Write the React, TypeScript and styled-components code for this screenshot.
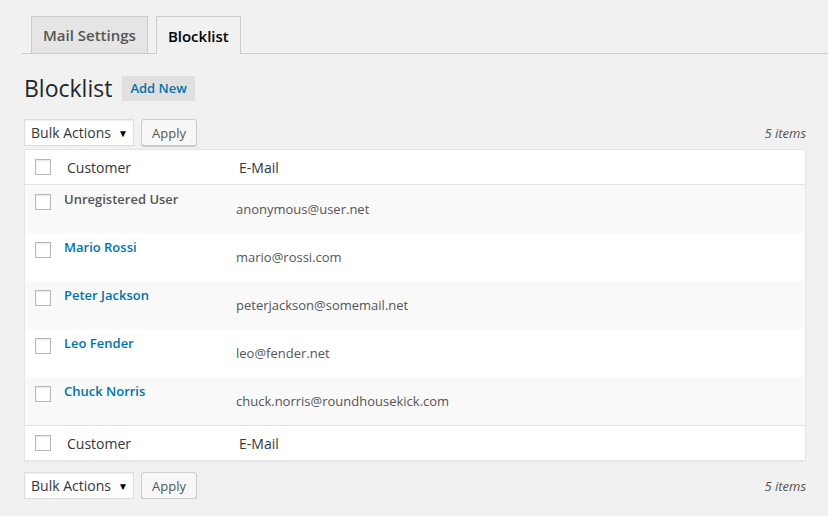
import React from "react";
import styled, { createGlobalStyle } from "styled-components";

const GlobalStyle = createGlobalStyle`
  body {
    margin: 0;
    background: #f1f1f1;
    font-family: "Open Sans", "Liberation Sans", sans-serif;
    font-size: 13px;
    color: #444;
  }
`;

const Page = styled.div`
  padding: 16px 22px 0 22px;
`;

const TabBar = styled.div`
  display: flex;
  gap: 8px;
  padding-left: 9px;
  border-bottom: 1px solid #ccc;
  margin-right: -22px;
`;

const Tab = styled.div<{ $active?: boolean }>`
  box-sizing: border-box;
  padding: 0 11px;
  display: flex;
  align-items: center;
  font-size: 15px;
  font-weight: 600;
  border: 1px solid #ccc;
  border-bottom: none;
  margin-bottom: ${(p) => (p.$active ? "-1px" : "0")};
  height: ${(p) => (p.$active ? "38px" : "37px")};
  background: ${(p) => (p.$active ? "#f1f1f1" : "#e5e5e5")};
  color: ${(p) => (p.$active ? "#000" : "#555")};
`;

const TitleRow = styled.div`
  display: flex;
  align-items: center;
  gap: 10px;
  padding: 20px 0 0 2px;
`;

const Title = styled.h1`
  margin: 0;
  font-size: 23px;
  font-weight: 400;
  color: #23282d;
  line-height: 29px;
`;

const AddNew = styled.span`
  display: inline-block;
  background: #e0e0e0;
  color: #0073aa;
  font-weight: 600;
  font-size: 13px;
  padding: 0 8px;
  line-height: 25px;
`;

const NavRow = styled.div<{ $foot?: boolean }>`
  display: flex;
  align-items: center;
  gap: 7px;
  padding: ${(p) => (p.$foot ? "11px 0 0 2px" : "16px 0 3px 2px")};
  height: 27px;
`;

const Select = styled.div`
  width: 110px;
  height: 27px;
  box-sizing: border-box;
  background: #fff;
  border: 1px solid #ddd;
  display: flex;
  align-items: center;
  justify-content: space-between;
  padding: 0 5px 0 6px;
  font-size: 14px;
  color: #32373c;
  box-shadow: inset 0 1px 2px rgba(0, 0, 0, 0.07);
`;

const Caret = styled.span`
  font-size: 10px;
  color: #000;
`;

const Button = styled.div`
  height: 27px;
  box-sizing: border-box;
  padding: 0 10px;
  display: flex;
  align-items: center;
  border: 1px solid #ccc;
  border-radius: 3px;
  background: #f7f7f7;
  box-shadow: 0 1px 0 #ccc;
  color: #555;
  font-size: 13px;
`;

const Count = styled.span`
  margin-left: auto;
  font-style: italic;
  color: #555;
  font-size: 13px;
  padding-top: 1px;
`;

const Table = styled.div`
  margin-left: 2px;
  background: #fff;
  border: 1px solid #e5e5e5;
  box-shadow: 0 1px 1px rgba(0, 0, 0, 0.04);
`;

const HeadRow = styled.div<{ $foot?: boolean }>`
  display: grid;
  grid-template-columns: 42px 172px 1fr;
  align-items: center;
  height: 34px;
  border-${(p) => (p.$foot ? "top" : "bottom")}: 1px solid #e1e1e1;
  font-size: 14px;
  color: #32373c;
`;

const Row = styled.div<{ $alt?: boolean }>`
  display: grid;
  grid-template-columns: 39px 172px 1fr;
  height: 48px;
  background: ${(p) => (p.$alt ? "#f9f9f9" : "#fff")};
`;

const Check = styled.div<{ $top?: number }>`
  width: 16px;
  height: 16px;
  box-sizing: border-box;
  border: 1px solid #b4b9be;
  background: #fff;
  box-shadow: inset 0 1px 2px rgba(0, 0, 0, 0.1);
  margin-left: 10px;
  margin-top: ${(p) => p.$top ?? 0}px;
`;

const HeadCell = styled.div`
  padding-left: 0;
`;

const Name = styled.div<{ $link?: boolean }>`
  padding: 5px 0 0 0;
  font-weight: 600;
  font-size: 13px;
  color: ${(p) => (p.$link ? "#0073aa" : "#555")};
`;

const Email = styled.div`
  padding: 15px 0 0 0;
  font-size: 13px;
  color: #555;
`;

const rows = [
  { name: "Unregistered User", email: "anonymous@user.net", link: false },
  { name: "Mario Rossi", email: "mario@rossi.com", link: true },
  { name: "Peter Jackson", email: "peterjackson@somemail.net", link: true },
  { name: "Leo Fender", email: "leo@fender.net", link: true },
  { name: "Chuck Norris", email: "chuck.norris@roundhousekick.com", link: true },
];

const Nav = ({ foot }: { foot?: boolean }) => (
  <NavRow $foot={foot}>
    <Select>
      Bulk Actions <Caret>▼</Caret>
    </Select>
    <Button>Apply</Button>
    <Count>5 items</Count>
  </NavRow>
);

const Header = ({ foot }: { foot?: boolean }) => (
  <HeadRow $foot={foot}>
    <Check />
    <HeadCell>Customer</HeadCell>
    <HeadCell>E-Mail</HeadCell>
  </HeadRow>
);

export default function App() {
  return (
    <Page>
      <GlobalStyle />
      <TabBar>
        <Tab>Mail Settings</Tab>
        <Tab $active>Blocklist</Tab>
      </TabBar>
      <TitleRow>
        <Title>Blocklist</Title>
        <AddNew>Add New</AddNew>
      </TitleRow>
      <Nav />
      <Table>
        <Header />
        {rows.map((r, i) => (
          <Row key={r.email} $alt={i % 2 === 0}>
            <Check $top={9} />
            <Name $link={r.link}>{r.name}</Name>
            <Email>{r.email}</Email>
          </Row>
        ))}
        <Header foot />
      </Table>
      <Nav foot />
    </Page>
  );
}
